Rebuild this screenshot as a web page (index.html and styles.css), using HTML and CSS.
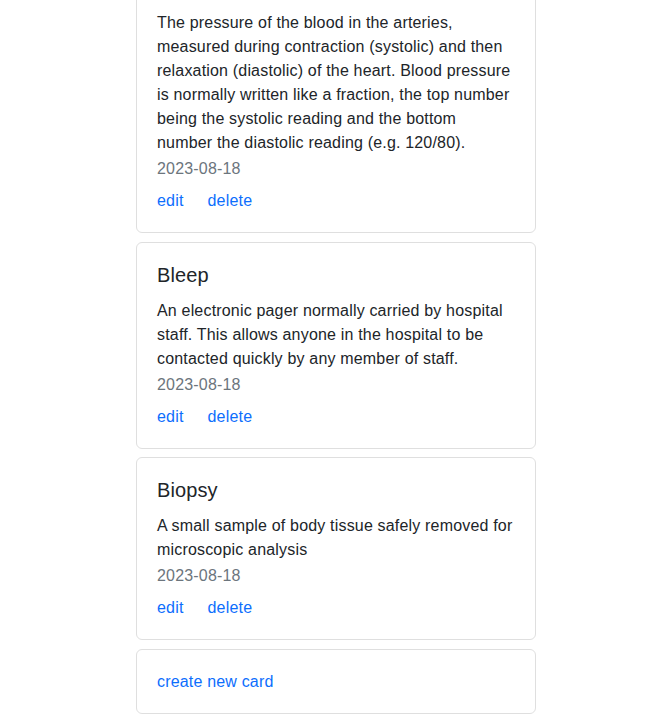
FILE: index.html
```html
<!DOCTYPE html>
<html lang="en">
<head>
<meta charset="utf-8">
<title>Cards</title>
<link rel="stylesheet" href="styles.css">
</head>
<body>
<main class="list">
  <section class="card card-first">
    <p class="card-text">The pressure of the blood in the arteries, measured during contraction (systolic) and then relaxation (diastolic) of the heart. Blood pressure is normally written like a fraction, the top number being the systolic reading and the bottom number the diastolic reading (e.g. 120/80).</p>
    <p class="card-date">2023-08-18</p>
    <div class="card-links"><a href="#">edit</a><a href="#">delete</a></div>
  </section>
  <section class="card">
    <h5 class="card-title">Bleep</h5>
    <p class="card-text">An electronic pager normally carried by hospital staff. This allows anyone in the hospital to be contacted quickly by any member of staff.</p>
    <p class="card-date">2023-08-18</p>
    <div class="card-links"><a href="#">edit</a><a href="#">delete</a></div>
  </section>
  <section class="card">
    <h5 class="card-title">Biopsy</h5>
    <p class="card-text">A small sample of body tissue safely removed for microscopic analysis</p>
    <p class="card-date">2023-08-18</p>
    <div class="card-links"><a href="#">edit</a><a href="#">delete</a></div>
  </section>
  <section class="card">
    <div class="card-links"><a href="#">create new card</a></div>
  </section>
</main>
</body>
</html>
```
FILE: styles.css
```css
html, body {
  margin: 0;
  padding: 0;
  background: #fff;
}
body {
  font-family: "Liberation Sans", Arial, sans-serif;
  font-size: 16px;
  line-height: 24px;
  letter-spacing: 0.18px;
  color: #212529;
}
.list {
  width: 400px;
  margin: 0 auto 0 136px;
  display: flex;
  flex-direction: column;
  gap: 8.6px;
}
.card {
  border: 1px solid #dfdfdf;
  border-radius: 6px;
  padding: 20px 20px 19px;
  display: flex;
  flex-direction: column;
}
.card-first {
  margin-top: -10px;
  border-top-left-radius: 0;
  border-top-right-radius: 0;
}
.card-title {
  margin: 0 0 12px;
  font-size: 20px;
  line-height: 24px;
  font-weight: 500;
  letter-spacing: 0.1px;
}
.card-text {
  margin: 0;
}
.card-date {
  margin: 2px 0 0;
  color: #6c757d;
}
.card-links {
  display: flex;
  gap: 24px;
}
.card-date + .card-links {
  margin-top: 8px;
}
.card-links a {
  color: #0d6efd;
  text-decoration: none;
}
```
